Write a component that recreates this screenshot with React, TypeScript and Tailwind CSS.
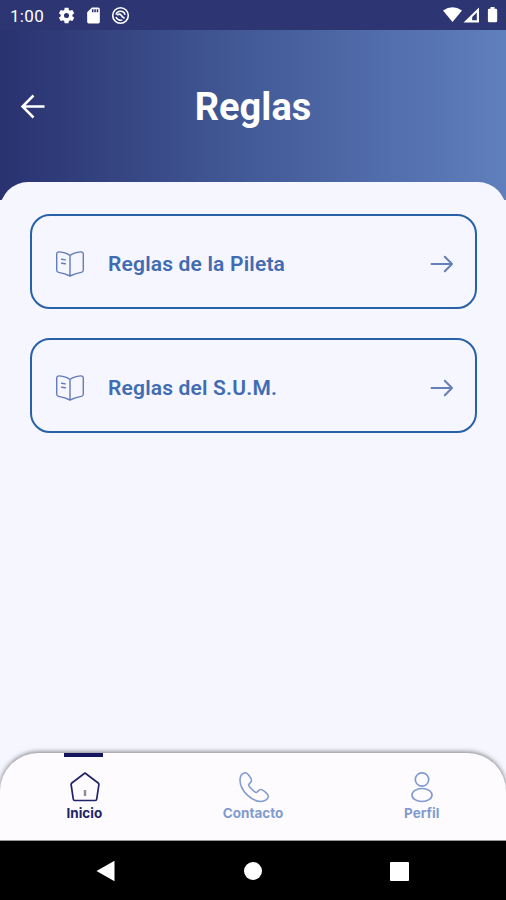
import React from "react";

function StatusBar() {
  return (
    <div className="flex h-[30px] shrink-0 items-center justify-between bg-[#2d3673] pr-[7px] pl-[10px] text-white">
      <div className="flex items-center">
        <span className="w-[46px] pt-px text-[17px] leading-[30px] tracking-[0.3px] whitespace-nowrap">1:00</span>
        <svg className="ml-px" width="19" height="19" viewBox="0 0 24 24" fill="currentColor">
          <path d="M19.4 13c.04-.3.06-.6.06-1s-.02-.7-.07-1l2.1-1.6c.2-.2.2-.4.1-.6l-2-3.5c-.1-.2-.4-.3-.6-.2l-2.4 1c-.5-.4-1-.7-1.6-1l-.4-2.5c0-.3-.2-.4-.5-.4h-4c-.2 0-.4.2-.5.4l-.4 2.500c-.6.3-1.100.6-1.600 1l-2.400-1c-.2-.1-.5 0-.6.2l-2 3.500c-.1.200-.1.500.1.600l2.100 1.600c-.1.300-.1.700-.1 1s0 .700.1 1l-2.100 1.600c-.2.200-.2.400-.1.600l2 3.500c.1.200.4.300.6.200l2.400-1c.5.400 1 .700 1.600 1l.4 2.500c.1.200.3.400.5.400h4c.3 0 .5-.2.500-.4l.4-2.500c.6-.3 1.100-.6 1.600-1l2.400 1c.2.100.5 0 .6-.2l2-3.500c.1-.2.1-.5-.1-.6zM12 15.200a3.200 3.200 0 1 1 0-6.400 3.200 3.200 0 0 1 0 6.400z" />
        </svg>
        <svg className="ml-[8px]" width="19" height="19" viewBox="0 0 24 24" fill="currentColor">
          <path d="M18 2h-8L4 8v12a2 2 0 0 0 2 2h12a2 2 0 0 0 2-2V4a2 2 0 0 0-2-2zm-6 6h-2V4h2v4zm3 0h-2V4h2v4zm3 0h-2V4h2v4z" />
        </svg>
        <svg className="ml-[8px]" width="19" height="19" viewBox="0 0 20 20" fill="none" stroke="currentColor">
          <circle cx="10" cy="10" r="8.2" strokeWidth="1.7" />
          <path d="M5.200 9A5 5 0 0 1 14.800 9.200M5.300 11.500A5 5 0 0 0 12 14.600M6.500 9.500Q9 7.500 10.500 9.500T14.300 13" strokeWidth="1.700" />
        </svg>
      </div>
      <svg width="57" height="20" viewBox="0 0 57 20" fill="currentColor">
        <path d="M1 5.500Q10.500-1 20 5.500L10.500 17Z" />
        <path fillRule="evenodd" d="M21.500 17.500L37 2.500V17.500ZM30.200 12V15.300H34.800V7.600Z" />
        <path d="M48.500 2h4v1.700h1.300q1.400 0 1.400 1.400v10.800q0 1.400-1.400 1.400h-6.500q-1.400 0-1.400-1.400V5.100q0-1.400 1.400-1.400h1.200z" />
      </svg>
    </div>
  );
}

function BookIcon() {
  return (
    <svg width="30" height="28" viewBox="0 0 30 28" fill="none" stroke="#637db9" strokeWidth="1.4" strokeLinecap="round" strokeLinejoin="round">
      <path d="M15 5.500C12.500 3.500 8.500 2.300 4.300 1.900Q1.700 1.800 1.700 4.200V20Q1.700 22 3.700 22.400C8 23.200 12 24.500 15 26C18 24.500 22 23.200 26.300 22.400Q28.300 22 28.300 20V4.200Q28.300 1.800 25.700 1.900C21.500 2.300 17.500 3.500 15 5.500ZM15 5.500V26" />
      <path d="M6.600 9.300L10.300 9.900M6.600 13.200L10.300 13.800" />
    </svg>
  );
}

function RuleCard({ label }: { label: string }) {
  return (
    <button className="flex h-[95px] w-full items-center rounded-[20px] border-2 border-[#2961a8] pt-[5px] pr-[21px] pl-[23px]">
      <BookIcon />
      <span className="ml-[23px] flex-1 pt-px text-left text-[21px] font-semibold tracking-[0.18px] text-[#416bb2]">{label}</span>
      <svg width="24" height="18" viewBox="0 0 24 18" fill="none" stroke="#6580b5" strokeWidth="2" strokeLinecap="round" strokeLinejoin="round">
        <path d="M1.500 9H22M14.800 1.800L22 9L14.800 16.200" />
      </svg>
    </button>
  );
}

function Tab({ label, active, children }: { label: string; active?: boolean; children: React.ReactNode }) {
  return (
    <button className={`flex flex-1 flex-col items-center ${active ? "text-[#202467]" : "text-[#819bce]"}`}>
      <span className={`mr-[2px] h-[4px] w-[39px] ${active ? "bg-[#14145f]" : ""}`} />
      <span className="mt-[13px] ml-px flex h-[33px] items-center">{children}</span>
      <span className="font-[Inter,sans-serif] text-[13.500px] leading-[20px] font-bold">{label}</span>
    </button>
  );
}

export default function App() {
  return (
    <div className="flex h-[900px] w-[506px] flex-col overflow-hidden bg-[#f5f6ff] font-['Roboto',sans-serif]">
      <StatusBar />
      <header className="-mb-[18px] flex h-[170px] shrink-0 bg-linear-to-r from-[#2a3270] via-[#435b98] to-[#607fbd] pb-[18px]">
        <div className="grid flex-1 grid-cols-[64px_1fr_64px] items-center">
          <svg className="ml-[19px]" width="28" height="28" viewBox="0 0 28 28" fill="none" stroke="white" strokeWidth="2.500">
            <path d="M25.500 14.500H3.500M14.500 3.500L3.500 14.500L14.500 25.500" />
          </svg>
          <h1 className="pt-px text-center text-[38px] leading-[48px] font-bold text-white">Reglas</h1>
        </div>
      </header>
      <main className="flex flex-1 flex-col gap-[29px] rounded-t-[28px] bg-[#f5f6ff] pt-[32px] pr-[29px] pl-[30px]">
        <RuleCard label="Reglas de la Pileta" />
        <RuleCard label="Reglas del S.U.M." />
      </main>
      <nav className="flex h-[88px] shrink-0 rounded-t-[38px] border-b border-[#999] bg-[#fdfbfe] shadow-[0_-1px_5px_rgba(0,0,0,0.5)]">
        <Tab label="Inicio" active>
          <svg width="32" height="32" viewBox="0 0 32 32" fill="none" stroke="currentColor" strokeWidth="1.700" strokeLinejoin="round">
            <path d="M16 2L29.500 12.300Q30 12.800 29.900 13.500L27.700 28.200Q27.500 29.500 26.300 29.500H5.700Q4.500 29.500 4.300 28.200L2.100 13.500Q2 12.800 2.500 12.300Z" />
            <path d="M16 19V25" stroke="#8e8d9d" strokeWidth="2.500" />
          </svg>
        </Tab>
        <Tab label="Contacto">
          <svg width="32" height="32" viewBox="0 0 32 32" fill="none" stroke="currentColor" strokeWidth="1.600" strokeLinejoin="round">
            <path d="M7 1.800C4.500 2.500 2 5 2 9C2 20 14 30.500 23 30.500C27 30.500 30 28 30.300 25.500C30.500 23 25 18.500 22.500 18.500C20.500 18.500 20 21.500 18.200 21.500C16.500 21.500 10.700 15.500 10.700 14C10.700 12.500 13.700 11.600 13.500 9.500C13.300 7 9.300 1.200 7 1.800Z" />
          </svg>
        </Tab>
        <Tab label="Perfil">
          <svg width="32" height="32" viewBox="0 0 32 32" fill="none" stroke="currentColor" strokeWidth="1.700">
            <circle cx="16" cy="8.500" r="6.700" />
            <ellipse cx="16" cy="24" rx="10" ry="6.500" />
          </svg>
        </Tab>
      </nav>
      <footer className="flex h-[59px] shrink-0 items-center justify-between bg-black pt-px pr-[97px] pl-[96px]">
        <svg width="19" height="22" viewBox="0 0 19 22" fill="white"><path d="M.5 11L18.500 .8V21.200Z" /></svg>
        <span className="ml-px h-[18px] w-[18px] rounded-full bg-white" />
        <span className="h-[19px] w-[19px] rounded-[1px] bg-white" />
      </footer>
    </div>
  );
}
